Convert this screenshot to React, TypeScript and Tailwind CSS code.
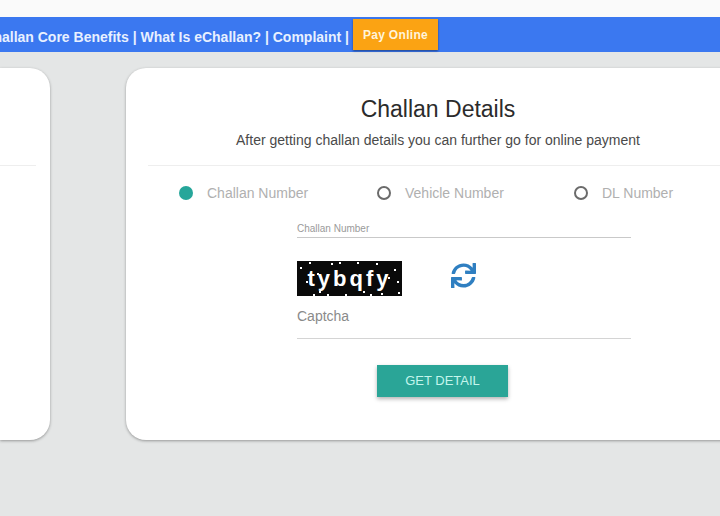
import { FaSync } from "react-icons/fa";

const noise = [
  [3, 6], [12, 1], [22, 30], [34, 2], [9, 20], [20, 12], [48, 33], [60, 1], [66, 30], [79, 2],
  [84, 32], [97, 8], [100, 20], [91, 16], [101, 31], [55, 16], [73, 33], [30, 33], [16, 33], [42, 1],
];

function Radio({ label, active, className }: { label: string; active?: boolean; className: string }) {
  return (
    <div className={`flex items-center ${className}`}>
      {active ? (
        <span className="h-[14px] w-[14px] rounded-full bg-[#26a69a]" />
      ) : (
        <span className="h-[14px] w-[14px] rounded-full border-2 border-[#6b6b6b]" />
      )}
      <span className="ml-[14px] text-[14px] text-[#b0b0b0]">{label}</span>
    </div>
  );
}

export default function App() {
  return (
    <div className="h-[516px] w-[720px] overflow-hidden bg-[#e4e6e6] font-['Liberation_Sans',Arial,sans-serif]">
      <div className="h-[17px] bg-[#fafafa]" />
      <div className="flex h-[35px] w-[720px] items-center bg-[#3b78f0]">
        <div className="flex w-[438px] shrink-0 items-center justify-end">
          <p className="mr-[4px] mt-[6px] shrink-0 whitespace-nowrap text-[14px] font-bold text-[#e8f0ff]">
            eChallan Core Benefits | What Is eChallan? | Complaint |
          </p>
          <button className="-mt-[1px] flex h-[31px] w-[85px] shrink-0 items-center justify-center bg-[#fba313] pt-[1px] text-[12px] font-bold tracking-[0.3px] text-[#fff4dc] shadow-[0_1px_2px_rgba(0,0,0,0.45)]">
            Pay Online
          </button>
        </div>
      </div>

      <div className="mt-[16px] flex h-[372px] gap-[76px]">
        <div className="flex h-full w-[50px] shrink-0 flex-col rounded-r-[20px] bg-white shadow-[0_1px_3px_rgba(0,0,0,0.35)]">
          <div className="mt-[97px] h-px w-[36px] bg-[#eeeeee]" />
        </div>

        <div className="h-full w-[624px] shrink-0 rounded-l-[20px] bg-white pt-[27px] shadow-[0_1px_3px_rgba(0,0,0,0.35)]">
          <h1 className="text-center text-[23px] leading-[28px] text-[#2b2b2b]">Challan Details</h1>
          <p className="mt-[8px] text-center text-[14px] leading-[18px] text-[#4a4a4a]">
            After getting challan details you can further go for online payment
          </p>
          <div className="ml-[22px] mt-[16px] h-px bg-[#eeeeee]" />

          <div className="ml-[53px] mt-[19px] flex h-[16px] items-center">
            <Radio label="Challan Number" active className="w-[198px]" />
            <Radio label="Vehicle Number" className="w-[197px]" />
            <Radio label="DL Number" className="" />
          </div>

          <div className="ml-[171px] mt-[21px] w-[334px]">
            <p className="border-b border-[#c9c9c9] pb-[2px] text-[10px] leading-[13px] text-[#9a9a9a]">
              Challan Number
            </p>

            <div className="mt-[23px] flex items-center">
              <div className="relative flex h-[35px] w-[105px] items-center justify-center overflow-hidden bg-[#0a0a0a]">
                <span className="text-[22px] font-bold leading-none tracking-[3px] text-white">tybqfy</span>
                {noise.map(([x, y], i) => (
                  <span
                    key={i}
                    className="absolute h-[2px] w-[2px] bg-white"
                    style={{ left: x, top: y }}
                  />
                ))}
              </div>
              <FaSync className="ml-[49px] h-[25px] w-[25px] -translate-y-[3px] text-[#2f7fc1]" />
            </div>

            <p className="mt-[11px] text-[14px] leading-[18px] text-[#8a8a8a]">Captcha</p>
            <div className="mt-[13px] h-px bg-[#d4d4d4]" />

            <button className="ml-[80px] mt-[26px] flex h-[32px] w-[131px] items-center justify-center bg-[#2aa597] text-[13px] text-[#c4f5ec] shadow-[0_2px_4px_rgba(0,0,0,0.3)]">
              GET DETAIL
            </button>
          </div>
        </div>
      </div>
    </div>
  );
}
